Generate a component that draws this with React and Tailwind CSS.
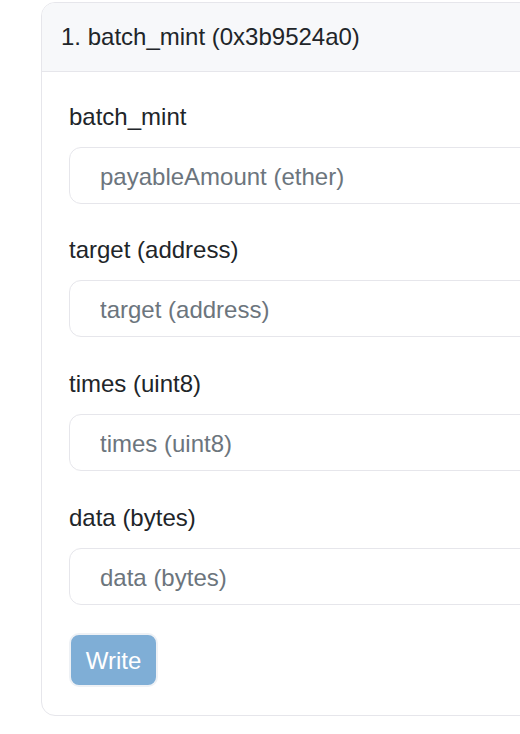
import React from "react";

const fields = [
  { label: "batch_mint", placeholder: "payableAmount (ether)", mt: "" },
  { label: "target (address)", placeholder: "target (address)", mt: "mt-[32px]" },
  { label: "times (uint8)", placeholder: "times (uint8)", mt: "mt-[33px]" },
  { label: "data (bytes)", placeholder: "data (bytes)", mt: "mt-[33px]" },
];

export default function App() {
  return (
    <div
      className="w-[520px] h-[734px] overflow-hidden bg-white pt-[2px] pl-[41px]"
      style={{ fontFamily: '"Liberation Sans", Arial, sans-serif' }}
    >
      <div className="w-[620px] rounded-[14px] border border-[#e6e6eb] overflow-hidden">
        <div className="bg-[#f7f8fa] border-b border-[#e6e6eb] px-[19px] h-[69px] flex items-center text-[24px] text-[#212529]">
          1. batch_mint (0x3b9524a0)
        </div>
        <div className="px-[27px] pt-[31px] pb-[28px] flex flex-col">
          {fields.map((f, i) => (
            <div key={i} className={f.mt}>
              <div className="text-[24px] leading-[28px] text-[#212529] mb-[16px]">
                {f.label}
              </div>
              <input
                placeholder={f.placeholder}
                className="block w-full h-[57px] rounded-[12px] border border-[#e6e6eb] px-[30px] pt-[3px] text-[24px] text-[#212529] placeholder:text-[#6c757d] outline-none"
              />
            </div>
          ))}
          <div className="mt-[28px]">
            <button className="w-[89px] h-[54px] rounded-[10px] bg-[#7faed6] border-2 border-[#eef1f5] text-white text-[24px] pt-[1px]">
              Write
            </button>
          </div>
        </div>
      </div>
    </div>
  );
}
